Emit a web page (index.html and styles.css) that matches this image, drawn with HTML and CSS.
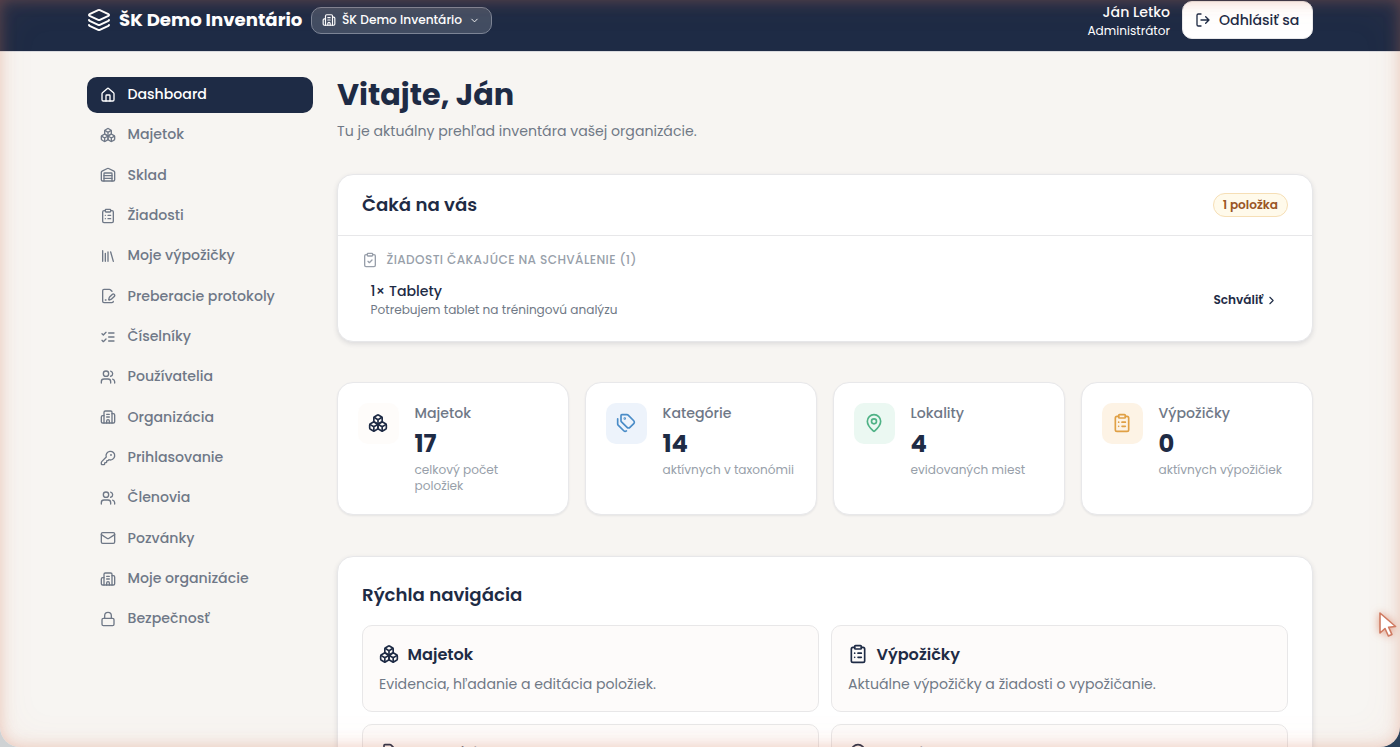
FILE: index.html
```html
<!DOCTYPE html>
<html lang="sk">
<head>
<meta charset="utf-8">
<title>ŠK Demo Inventário</title>
<link rel="stylesheet" href="styles.css">
</head>
<body>
<svg class="sprite" aria-hidden="true">
  <symbol id="layers" viewBox="0 0 24 24"><path d="M12.83 2.18a2 2 0 0 0-1.66 0L2.6 6.08a1 1 0 0 0 0 1.83l8.58 3.91a2 2 0 0 0 1.66 0l8.58-3.9a1 1 0 0 0 0-1.83z"/><path d="M2 12a1 1 0 0 0 .58.91l8.6 3.91a2 2 0 0 0 1.65 0l8.58-3.9A1 1 0 0 0 22 12"/><path d="M2 17a1 1 0 0 0 .58.91l8.6 3.91a2 2 0 0 0 1.65 0l8.58-3.9A1 1 0 0 0 22 17"/></symbol>
  <symbol id="building" viewBox="0 0 24 24"><path d="M10 12h4M10 8h4M14 21v-3a2 2 0 0 0-4 0v3"/><path d="M6 10H4a2 2 0 0 0-2 2v7a2 2 0 0 0 2 2h16a2 2 0 0 0 2-2V9a2 2 0 0 0-2-2h-2"/><path d="M6 21V5a2 2 0 0 1 2-2h8a2 2 0 0 1 2 2v16"/></symbol>
  <symbol id="down" viewBox="0 0 24 24"><path d="m6 9 6 6 6-6"/></symbol>
  <symbol id="right" viewBox="0 0 24 24"><path d="m9 18 6-6-6-6"/></symbol>
  <symbol id="logout" viewBox="0 0 24 24"><path d="m16 17 5-5-5-5M21 12H9M9 21H5a2 2 0 0 1-2-2V5a2 2 0 0 1 2-2h4"/></symbol>
  <symbol id="house" viewBox="0 0 24 24"><path d="M15 21v-8a1 1 0 0 0-1-1h-4a1 1 0 0 0-1 1v8"/><path d="M3 10a2 2 0 0 1 .709-1.528l7-6a2 2 0 0 1 2.582 0l7 6A2 2 0 0 1 21 10v9a2 2 0 0 1-2 2H5a2 2 0 0 1-2-2z"/></symbol>
  <symbol id="boxes" viewBox="0 0 24 24"><path d="M2.97 12.92A2 2 0 0 0 2 14.63v3.24a2 2 0 0 0 .97 1.71l3 1.8a2 2 0 0 0 2.06 0L12 19v-5.5l-5-3-4.03 2.42Z"/><path d="m7 16.5-4.74-2.85M7 16.5l5-3M7 16.5v5.17"/><path d="M12 13.5V19l3.97 2.38a2 2 0 0 0 2.06 0l3-1.8a2 2 0 0 0 .97-1.71v-3.24a2 2 0 0 0-.97-1.71L17 10.5l-5 3Z"/><path d="m17 16.5-5-3M17 16.5l4.74-2.85M17 16.5v5.17"/><path d="M7.97 4.42A2 2 0 0 0 7 6.13v4.37l5 3 5-3V6.13a2 2 0 0 0-.97-1.71l-3-1.8a2 2 0 0 0-2.06 0l-3 1.8Z"/><path d="M12 8 7.26 5.15M12 8l4.74-2.85M12 13.5V8"/></symbol>
  <symbol id="warehouse" viewBox="0 0 24 24"><path d="M18 21V10a1 1 0 0 0-1-1H7a1 1 0 0 0-1 1v11"/><path d="M22 19a2 2 0 0 1-2 2H4a2 2 0 0 1-2-2V8a2 2 0 0 1 1.132-1.803l7.95-3.974a2 2 0 0 1 1.837 0l7.948 3.974A2 2 0 0 1 22 8z"/><path d="M6 13h12M6 17h12"/></symbol>
  <symbol id="cliplist" viewBox="0 0 24 24"><rect width="8" height="4" x="8" y="2" rx="1"/><path d="M16 4h2a2 2 0 0 1 2 2v14a2 2 0 0 1-2 2H6a2 2 0 0 1-2-2V6a2 2 0 0 1 2-2h2M12 11h4M12 16h4M8 11h.01M8 16h.01"/></symbol>
  <symbol id="clipcheck" viewBox="0 0 24 24"><rect width="8" height="4" x="8" y="2" rx="1"/><path d="M16 4h2a2 2 0 0 1 2 2v14a2 2 0 0 1-2 2H6a2 2 0 0 1-2-2V6a2 2 0 0 1 2-2h2M9 14l2 2 4-4"/></symbol>
  <symbol id="library" viewBox="0 0 24 24"><path d="m16 6 4 14M12 6v14M8 8v12M4 4v16"/></symbol>
  <symbol id="filepen" viewBox="0 0 24 24"><path d="m18 5-2.414-2.414A2 2 0 0 0 14.172 2H6a2 2 0 0 0-2 2v16a2 2 0 0 0 2 2h12a2 2 0 0 0 2-2"/><path d="M21.378 12.626a1 1 0 0 0-3.004-3.004l-4.01 4.012a2 2 0 0 0-.506.854l-.837 2.87a.5.5 0 0 0 .62.62l2.87-.837a2 2 0 0 0 .854-.506z"/><path d="M8 18h1"/></symbol>
  <symbol id="checks" viewBox="0 0 24 24"><path d="m3 17 2 2 4-4M3 7l2 2 4-4M13 6h8M13 12h8M13 18h8"/></symbol>
  <symbol id="users" viewBox="0 0 24 24"><path d="M16 21v-2a4 4 0 0 0-4-4H6a4 4 0 0 0-4 4v2"/><circle cx="9" cy="7" r="4"/><path d="M22 21v-2a4 4 0 0 0-3-3.87M16 3.13a4 4 0 0 1 0 7.75"/></symbol>
  <symbol id="key" viewBox="0 0 24 24"><path d="M2.586 17.414A2 2 0 0 0 2 18.828V21a1 1 0 0 0 1 1h3a1 1 0 0 0 1-1v-1a1 1 0 0 1 1-1h1a1 1 0 0 0 1-1v-1a1 1 0 0 1 1-1h.172a2 2 0 0 0 1.414-.586l.814-.814a6.5 6.5 0 1 0-4-4z"/><circle cx="16.5" cy="7.5" r=".5"/></symbol>
  <symbol id="mail" viewBox="0 0 24 24"><rect x="2" y="4" width="20" height="16" rx="2"/><path d="m22 7-8.991 5.727a2 2 0 0 1-2.009 0L2 7"/></symbol>
  <symbol id="lock" viewBox="0 0 24 24"><rect width="18" height="11" x="3" y="11" rx="2"/><path d="M7 11V7a5 5 0 0 1 10 0v4"/></symbol>
  <symbol id="tags" viewBox="0 0 24 24"><path d="M13.172 2a2 2 0 0 1 1.414.586l6.71 6.71a2.4 2.4 0 0 1 0 3.408l-4.592 4.592a2.4 2.4 0 0 1-3.408 0l-6.71-6.71A2 2 0 0 1 6 9.172V3a1 1 0 0 1 1-1z"/><path d="M2 7v6.172a2 2 0 0 0 .586 1.414l6.71 6.71a2.4 2.4 0 0 0 3.191.193"/><circle cx="10.5" cy="6.5" r=".5"/></symbol>
  <symbol id="pin" viewBox="0 0 24 24"><path d="M20 10c0 4.993-5.539 10.193-7.399 11.799a1 1 0 0 1-1.202 0C9.539 20.193 4 14.993 4 10a8 8 0 0 1 16 0"/><circle cx="12" cy="10" r="3"/></symbol>
</svg>
<div class="window">
  <header class="topbar">
    <div class="brand"><svg class="icon logo"><use href="#layers"/></svg><span class="brand-name">ŠK Demo Inventário</span></div>
    <button class="org"><svg class="icon org-icon"><use href="#building"/></svg><span class="org-name">ŠK Demo Inventário</span><svg class="icon org-arrow"><use href="#down"/></svg></button>
    <div class="account"><span class="account-name">Ján Letko</span><span class="account-role">Administrátor</span></div>
    <button class="logout"><svg class="icon"><use href="#logout"/></svg><span>Odhlásiť sa</span></button>
  </header>
  <div class="layout">
    <nav class="sidebar">
      <a class="nav-item active"><svg class="icon"><use href="#house"/></svg><span>Dashboard</span></a>
      <a class="nav-item"><svg class="icon"><use href="#boxes"/></svg><span>Majetok</span></a>
      <a class="nav-item"><svg class="icon"><use href="#warehouse"/></svg><span>Sklad</span></a>
      <a class="nav-item"><svg class="icon"><use href="#cliplist"/></svg><span>Žiadosti</span></a>
      <a class="nav-item"><svg class="icon"><use href="#library"/></svg><span>Moje výpožičky</span></a>
      <a class="nav-item"><svg class="icon"><use href="#filepen"/></svg><span>Preberacie protokoly</span></a>
      <a class="nav-item"><svg class="icon"><use href="#checks"/></svg><span>Číselníky</span></a>
      <a class="nav-item"><svg class="icon"><use href="#users"/></svg><span>Používatelia</span></a>
      <a class="nav-item"><svg class="icon"><use href="#building"/></svg><span>Organizácia</span></a>
      <a class="nav-item"><svg class="icon"><use href="#key"/></svg><span>Prihlasovanie</span></a>
      <a class="nav-item"><svg class="icon"><use href="#users"/></svg><span>Členovia</span></a>
      <a class="nav-item"><svg class="icon"><use href="#mail"/></svg><span>Pozvánky</span></a>
      <a class="nav-item"><svg class="icon"><use href="#building"/></svg><span>Moje organizácie</span></a>
      <a class="nav-item"><svg class="icon"><use href="#lock"/></svg><span>Bezpečnosť</span></a>
    </nav>
    <main class="main">
      <h1 class="title">Vitajte, Ján</h1>
      <p class="subtitle">Tu je aktuálny prehľad inventára vašej organizácie.</p>
      <section class="card pending">
        <div class="pending-head"><h2 class="heading">Čaká na vás</h2><span class="badge">1 položka</span></div>
        <div class="pending-body">
          <div class="group"><svg class="icon"><use href="#clipcheck"/></svg><span>ŽIADOSTI ČAKAJÚCE NA SCHVÁLENIE (1)</span></div>
          <div class="request">
            <div class="request-text"><span class="request-name">1× Tablety</span><span class="request-note">Potrebujem tablet na tréningovú analýzu</span></div>
            <a class="approve"><span>Schváliť</span><svg class="icon"><use href="#right"/></svg></a>
          </div>
        </div>
      </section>
      <section class="stats">
        <div class="stat"><span class="tile tile-plain"><svg class="icon"><use href="#boxes"/></svg></span><div class="stat-text"><span class="stat-label">Majetok</span><span class="stat-value">17</span><span class="stat-note">celkový počet položiek</span></div></div>
        <div class="stat"><span class="tile tile-blue"><svg class="icon"><use href="#tags"/></svg></span><div class="stat-text"><span class="stat-label">Kategórie</span><span class="stat-value">14</span><span class="stat-note">aktívnych v taxonómii</span></div></div>
        <div class="stat"><span class="tile tile-green"><svg class="icon"><use href="#pin"/></svg></span><div class="stat-text"><span class="stat-label">Lokality</span><span class="stat-value">4</span><span class="stat-note">evidovaných miest</span></div></div>
        <div class="stat"><span class="tile tile-amber"><svg class="icon"><use href="#cliplist"/></svg></span><div class="stat-text"><span class="stat-label">Výpožičky</span><span class="stat-value">0</span><span class="stat-note">aktívnych výpožičiek</span></div></div>
      </section>
      <section class="card quick">
        <h2 class="heading">Rýchla navigácia</h2>
        <div class="links">
          <a class="link"><span class="link-title"><svg class="icon"><use href="#boxes"/></svg><span>Majetok</span></span><span class="link-note">Evidencia, hľadanie a editácia položiek.</span></a>
          <a class="link"><span class="link-title"><svg class="icon"><use href="#cliplist"/></svg><span>Výpožičky</span></span><span class="link-note">Aktuálne výpožičky a žiadosti o vypožičanie.</span></a>
          <a class="link"><span class="link-title"><svg class="icon"><use href="#tags"/></svg><span>Kategórie</span></span></a>
          <a class="link"><span class="link-title"><svg class="icon"><use href="#pin"/></svg><span>Lokality</span></span></a>
        </div>
      </section>
    </main>
  </div>
  <div class="glow"></div>
  <svg class="cursor" viewBox="0 0 20 28"><path d="M2 2v20l5-4.5 3.4 7.5 3.5-1.6-3.3-7.2 7-.7z"/></svg>
</div>
</body>
</html>
```
FILE: styles.css
```css
* { box-sizing: border-box; }
body {
  margin: 0;
  height: 747px;
  overflow: hidden;
  background: linear-gradient(90deg, #cfd2d4 0 50%, #2b4059 50%);
  font-family: Poppins, Inter, "Noto Sans", sans-serif;
  font-size: 14.12px;
  color: #1e2b45;
}
h1, h2, p { margin: 0; }
button { font: inherit; }
.sprite { display: none; }
.icon {
  flex: none;
  width: 16px;
  height: 16px;
  fill: none;
  stroke: currentColor;
  stroke-width: 2;
  stroke-linecap: round;
  stroke-linejoin: round;
}
.window {
  position: relative;
  height: 747px;
  overflow: hidden;
  background: #f7f5f2;
  border-radius: 0 0 20px 20px;
}
.topbar {
  display: flex;
  align-items: center;
  height: 52px;
  padding: 0 87px 11px;
  background: #1e2b45;
  border-bottom: 1px solid #d9dade;
  color: #fff;
}
.brand { display: flex; align-items: center; gap: 8px; width: 224px; }
.logo { width: 24px; height: 24px; }
.brand-name { font-size: 18.15px; line-height: 28px; padding-bottom: 1px; font-weight: 700; white-space: nowrap; }
.org {
  display: flex;
  align-items: center;
  width: 181px;
  height: 27px;
  padding: 0 11px 0 10px;
  border: 1px solid #7c8495;
  border-radius: 10px;
  background: #424d62;
  color: #fff;
}
.org-icon { width: 14px; height: 14px; margin-right: 6px; }
.org-name { font-size: 12.2px; font-weight: 500; white-space: nowrap; }
.org-arrow { width: 11px; height: 11px; margin-left: auto; }
.account { display: flex; flex-direction: column; align-items: flex-end; margin-left: auto; margin-right: 12px; padding-top: 1px; }
.account-name { font-weight: 500; line-height: 19px; }
.account-role { font-size: 12.1px; line-height: 17px; }
.logout {
  display: flex;
  align-items: center;
  gap: 8px;
  width: 131px;
  height: 38px;
  padding: 0 12px;
  border: 1px solid #e8e8ea;
  border-radius: 10px;
  background: #fff;
  color: #1e2b45;
  font-weight: 500;
  white-space: nowrap;
}
.layout { display: flex; gap: 24px; padding: 25px 87px 0; }
.sidebar { display: flex; flex-direction: column; gap: 4px; width: 226px; flex: none; }
.nav-item {
  display: flex;
  align-items: center;
  gap: 12px;
  height: 36.33px;
  flex: none;
  padding: 0 12.5px 1px;
  border-radius: 10px;
  color: #6f7887;
  font-weight: 500;
}
.active { background: #1e2b45; color: #fff; }
.main { flex: 1; min-width: 0; }
.title { font-size: 30.25px; line-height: 36px; font-weight: 700; }
.subtitle { margin-top: 8px; line-height: 20px; color: #707986; }
.card {
  border: 1px solid #e7e7e9;
  border-radius: 16px;
  background: #fff;
  box-shadow: 0 2px 5px rgba(30, 43, 69, .12);
}
.heading { font-size: 18.15px; line-height: 28px; font-weight: 600; }
.pending { height: 168px; margin-top: 33px; }
.pending-head {
  display: flex;
  align-items: center;
  justify-content: space-between;
  height: 61px;
  padding: 0 24px 1px;
  border-bottom: 1px solid #e7e7e9;
}
.badge {
  height: 24px;
  padding: 0 9px;
  border: 1px solid #f6dfb6;
  border-radius: 12px;
  background: #fffaeb;
  color: #9a5525;
  font-size: 12.1px;
  line-height: 22px;
  font-weight: 600;
}
.pending-body { padding: 15px 24px 0; }
.group {
  display: flex;
  align-items: center;
  gap: 8.5px;
  height: 18px;
  color: #989faa;
  font-size: 12.1px;
  font-weight: 500;
  letter-spacing: .4px;
}
.request { display: flex; align-items: center; justify-content: space-between; padding: 13px 10px 0 8.5px; }
.request-text { display: flex; flex-direction: column; }
.request-name { font-weight: 500; line-height: 19px; }
.request-note { color: #707986; font-size: 12.1px; line-height: 17px; }
.approve { display: flex; align-items: center; gap: 2px; font-size: 12.1px; font-weight: 600; }
.approve .icon { width: 13px; height: 13px; }
.stats { display: grid; grid-template-columns: repeat(4, 1fr); gap: 16px; margin-top: 40px; }
.stat {
  display: flex;
  align-items: flex-start;
  gap: 16px;
  height: 133px;
  padding: 20px;
  border: 1px solid #e8e8ea;
  border-radius: 16px;
  background: #fff;
  box-shadow: 0 1px 2px rgba(30, 43, 69, .08);
}
.tile { display: grid; place-items: center; width: 40.5px; height: 40.5px; flex: none; border-radius: 10px; }
.tile .icon { width: 20px; height: 20px; }
.tile-plain { background: #fefcfa; }
.tile-blue { background: #edf3fb; color: #4a8cc7; }
.tile-green { background: #ebf8f2; color: #4fb286; }
.tile-amber { background: #fdf3e5; color: #e0a045; }
.stat-text { display: flex; flex-direction: column; min-width: 0; }
.stat-label { color: #6f7887; line-height: 20px; font-weight: 500; }
.stat-value { margin-top: 3px; font-size: 24.2px; line-height: 36px; font-weight: 700; }
.stat-note { color: #989faa; font-size: 12.1px; line-height: 16px; }
.quick { height: 290px; margin-top: 41px; padding: 24px; }
.links { display: grid; grid-template-columns: 1fr 1fr; gap: 12px; margin-top: 16px; }
.link {
  display: flex;
  flex-direction: column;
  height: 87px;
  padding: 16px;
  border: 1px solid #e8e7e8;
  border-radius: 10px;
  background: #fdfbfa;
}
.link-title { display: flex; align-items: center; gap: 8.5px; height: 24px; font-size: 16.13px; font-weight: 600; }
.link-title .icon { width: 20px; height: 20px; }
.link-note { margin-top: 8px; line-height: 20px; color: #707986; }
.glow {
  position: absolute;
  inset: 0;
  border-radius: inherit;
  box-shadow: inset 0 0 15px rgba(217, 119, 87, .34), inset 0 0 40px rgba(217, 119, 87, .07);
  pointer-events: none;
}
.cursor {
  position: absolute;
  left: 1378px;
  top: 611px;
  width: 20px;
  height: 28px;
  fill: #fff;
  stroke: #cf7b62;
  stroke-width: 1.6;
  stroke-linejoin: round;
  filter: drop-shadow(0 0 4px rgba(217, 119, 87, .7));
}
```
